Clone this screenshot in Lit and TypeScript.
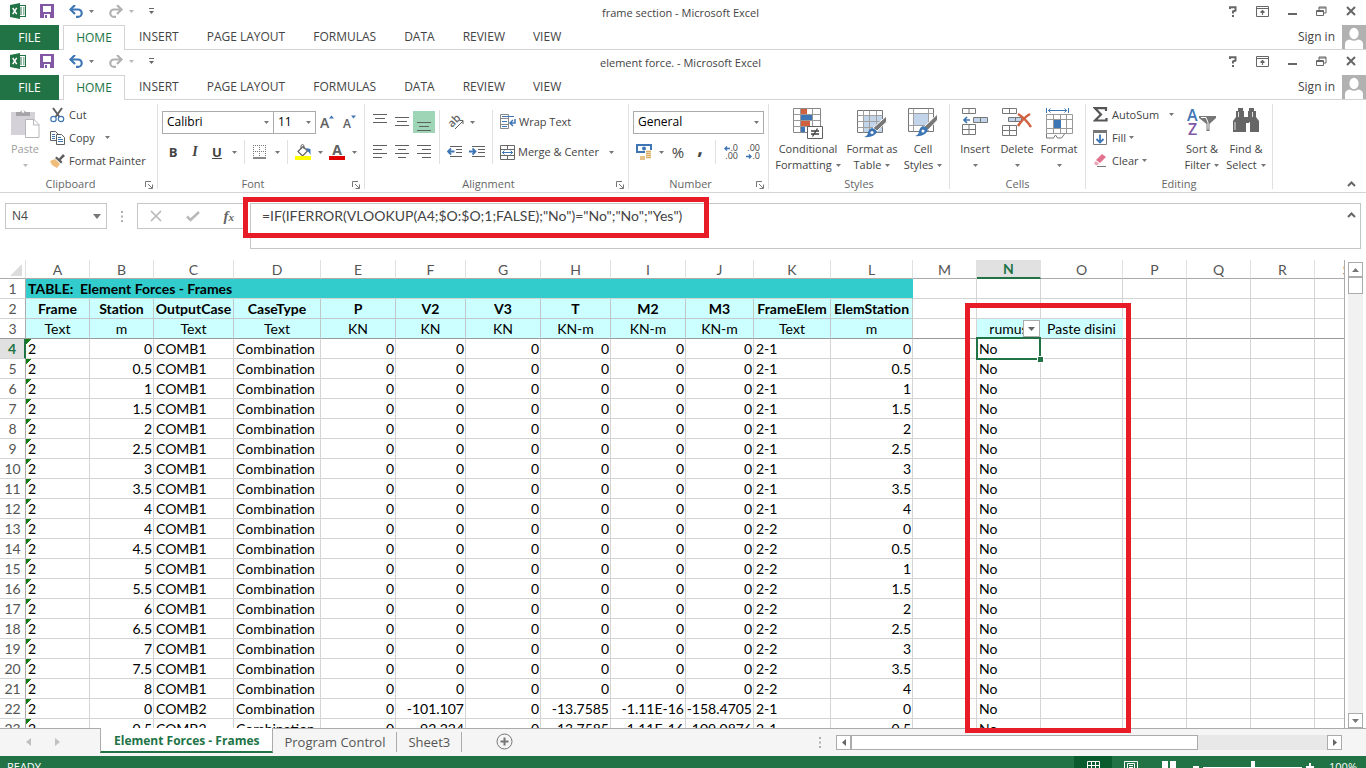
import { LitElement, html, svg, css, nothing } from "lit";
import { customElement, property } from "lit/decorators.js";
import { classMap } from "lit/directives/class-map.js";

const controls = css`
  :host { display: block; font-family: "Open Sans", "Noto Sans", sans-serif; font-size: 11px; line-height: 16px; color: #444; }
  * { box-sizing: border-box; }
  svg { display: block; flex: none; }
  button, select, input {
    font: inherit; color: inherit; background: transparent; border: 0; border-radius: 0; padding: 0; margin: 0; appearance: none;
  }
  button { white-space: nowrap; }
`;

const caret = (color = "#777") => svg`<svg width="5" height="3" viewBox="0 0 5 3"><path d="M0 0h5L2.5 3z" fill=${color} /></svg>`;

const icons = {
  excel: svg`<svg width="16" height="16" viewBox="0 0 16 16"><rect x="8.5" y="2.5" width="7" height="11" fill="#fff" stroke="#217346"/><path d="M10 5h2M13 5h1.5M10 7h2M13 7h1.5M10 9h2M13 9h1.5M10 11h2M13 11h1.5" stroke="#217346"/><path d="M0 2l10-2v16L0 14z" fill="#217346"/><path d="M2.7 5l4 6.200M6.700 4.800l-4 6.400" stroke="#fff" stroke-width="1.500"/></svg>`,
  save: svg`<svg width="14" height="14" viewBox="0 0 14 14"><path d="M1 1h12v12H1z" fill="none" stroke="#8258a4" stroke-width="2"/><path d="M1 8h12v5H1zM2 1h1v7H2zM11 1h1v7h-1z" fill="#8258a4"/><path d="M4 10h6v4H4z" fill="#fff"/><path d="M5 11h2v3H5z" fill="#8258a4"/></svg>`,
  undo: svg`<svg width="14" height="13" viewBox="0 0 14 13"><path d="M1.500 4.500H9a3.700 3.700 0 010 7.400H7" fill="none" stroke="#3e76b5" stroke-width="2.200"/><path d="M6 0L1.500 4.500 6 9" fill="none" stroke="#3e76b5" stroke-width="2.200"/></svg>`,
  redo: svg`<svg width="14" height="13" viewBox="0 0 14 13"><path d="M12.500 4.500H5a3.700 3.700 0 000 7.400h2" fill="none" stroke="#b1b1b1" stroke-width="2.200"/><path d="M8 0l4.500 4.500L8 9" fill="none" stroke="#b1b1b1" stroke-width="2.200"/></svg>`,
  customise: svg`<svg width="5" height="6" viewBox="0 0 5 6"><path d="M0 .5h5" stroke="#666"/><path d="M0 3h5L2.500 6z" fill="#666"/></svg>`,
  help: svg`<svg width="8" height="11" viewBox="0 0 8 11"><path d="M1 3V1.200h5.500v3.300L4 5.500v2" fill="none" stroke="#666" stroke-width="2"/><path d="M3 9h2v2H3z" fill="#666"/></svg>`,
  display: svg`<svg width="13" height="11" viewBox="0 0 13 11"><path d="M.5.5h12v10H.5zM.5 2.500h12" fill="none" stroke="#666"/><path d="M6.500 9V4.500M4.500 6.500l2-2 2 2" fill="none" stroke="#666" stroke-width="1.200"/></svg>`,
  minimise: svg`<svg width="9" height="11" viewBox="0 0 9 11"><path d="M0 7h9v2H0z" fill="#666"/></svg>`,
  restore: svg`<svg width="11" height="11" viewBox="0 0 11 11"><path d="M.5 4.500h7v5h-7zM.5 5.500h7M3 4V1h7v6H8M3 2h7" fill="none" stroke="#666"/></svg>`,
  close: svg`<svg width="10" height="10" viewBox="0 0 10 10"><path d="M1 1l8 8M9 1L1 9" stroke="#666" stroke-width="2"/></svg>`,
  avatar: svg`<svg width="24" height="24" viewBox="0 0 24 24"><path d="M0 0h24v24H0z" fill="#b1b1b1"/><ellipse cx="12" cy="8.500" rx="4.600" ry="5.800" fill="#fff"/><path d="M3 24v-5q0-4 5-4.500 4 2.500 8 0 5 .5 5 4.500v5z" fill="#fff"/></svg>`,
  paste: svg`<svg width="29" height="31" viewBox="0 0 29 31"><path d="M0 4h24v23H0z" fill="#d5d1d8"/><path d="M5 8V4h4a3.500 3.500 0 016 0h4v4z" fill="#a6a4a8"/><circle cx="12" cy="3.500" r="1.300" fill="#fff"/><path d="M14.500 11.500h8.500l5 5v13H14.500z" fill="#fff" stroke="#b7b5b9"/><path d="M22.500 11.500v5.500H28" fill="none" stroke="#b7b5b9"/></svg>`,
  cut: svg`<svg width="15" height="16" viewBox="0 0 15 16"><path d="M3 1l6.500 9M12 1L5.500 10" stroke="#606060" stroke-width="2"/><circle cx="3.500" cy="12" r="2.700" fill="none" stroke="#3e76b5" stroke-width="1.200"/><circle cx="11" cy="12" r="2.700" fill="none" stroke="#3e76b5" stroke-width="1.200"/></svg>`,
  copy: svg`<svg width="15" height="14" viewBox="0 0 15 14"><path d="M.5.5h5l3 3v6h-8z" fill="#fff" stroke="#606060"/><path d="M2 3.500h3M2 5.500h3M2 7.500h3" stroke="#3e76b5"/><path d="M6.500 3.500h5l3 3v7h-8z" fill="#fff" stroke="#606060"/><path d="M8 6.500h3M8 8.500h5M8 10.500h5" stroke="#3e76b5"/></svg>`,
  painter: svg`<svg width="15" height="14" viewBox="0 0 15 14"><path d="M0 7l5-2 5 5-3 4-5-3z" fill="#eebd7a"/><path d="M5 4l1.500-1.500 2.500 2L13 0l2 2-4.200 4 1.700 2L11 9.500z" fill="#606060"/></svg>`,
  grow: svg`<svg width="15" height="16" viewBox="0 0 15 16"><text x="0" y="14" font-size="14" font-weight="600" fill="#606060">A</text><path d="M9 4.500l2.500-3 2.500 3z" fill="#3e76b5"/></svg>`,
  shrink: svg`<svg width="15" height="16" viewBox="0 0 15 16"><text x="1" y="14" font-size="12" font-weight="600" fill="#606060">A</text><path d="M9 1.500h5l-2.500 3z" fill="#3e76b5"/></svg>`,
  borders: svg`<svg width="14" height="14" viewBox="0 0 14 14"><path d="M.5 0v12M6.500 0v12M12.500 0v12M0 .5h13M0 6.500h13" stroke="#777" stroke-dasharray="1 1"/><path d="M0 13h13" stroke="#606060" stroke-width="1.500"/></svg>`,
  fill: svg`<svg width="17" height="16" viewBox="0 0 17 16"><path d="M3 7.500l5-5 4.500 4.500-5 5z" fill="#fff" stroke="#606060" stroke-width="1.200"/><path d="M6 5V1.500q1.500-2 3 0V5" fill="none" stroke="#606060"/><path d="M11 4l4.500 1v6q-1.500-3-3-4z" fill="#3e76b5"/><path d="M0 12h16v4H0z" fill="#ffff00"/></svg>`,
  fontColor: svg`<svg width="16" height="16" viewBox="0 0 16 16"><text x="8" y="11" text-anchor="middle" font-size="14" font-weight="700" fill="#606060">A</text><path d="M0 12h16v4H0z" fill="#e00000"/></svg>`,
  orient: svg`<svg width="17" height="15" viewBox="0 0 17 15"><text x="0" y="0" font-size="11" font-weight="600" fill="#606060" transform="translate(4 13) rotate(-45)">ab</text><path d="M7 14l8-8M11.500 5.500H15V9" fill="none" stroke="#606060"/></svg>`,
  indentLess: svg`<svg width="16" height="12" viewBox="0 0 16 12"><path d="M3 .5h12M9 3.500h6M9 6.500h6M3 10.500h12" stroke="#606060"/><path d="M7.500 5.500H1.500M4 2.500l-3 3 3 3" fill="none" stroke="#3e76b5" stroke-width="1.800"/></svg>`,
  indentMore: svg`<svg width="16" height="12" viewBox="0 0 16 12"><path d="M3 .5h13M9 3.500h7M9 6.500h7M3 10.500h13" stroke="#606060"/><path d="M0 5.500h6M3.500 2.500l3 3-3 3" fill="none" stroke="#3e76b5" stroke-width="1.800"/></svg>`,
  wrap: svg`<svg width="16" height="16" viewBox="0 0 16 16"><path d="M.5.500h8v14h-8z" fill="#fff" stroke="#888"/><path d="M0 4.500h9M0 10.500h9" stroke="#888"/><path d="M2 2.500h12M2 7.500h5M2 12.500h5" stroke="#3e76b5"/><path d="M15 5v4h-4M13 6l-3 3 3 3" fill="none" stroke="#3e76b5" stroke-width="1.500"/></svg>`,
  merge: svg`<svg width="15" height="15" viewBox="0 0 15 15"><path d="M.5.500h14v14H.5zM.5 4.500h14M.5 10.500h14M7.500.500v4M7.500 10.500v4" fill="#fff" stroke="#666"/><path d="M2 7.500h11M4.500 5.500l-2 2 2 2M10.500 5.500l2 2-2 2" fill="none" stroke="#3e76b5"/></svg>`,
  currency: svg`<svg width="16" height="16" viewBox="0 0 16 16"><path d="M1 1h14v7H1z" fill="#fff" stroke="#3e76b5" stroke-width="2"/><circle cx="8" cy="4.500" r="2" fill="#3e76b5"/><path d="M9 6h7v9H9zM4 11h5v5H4z" fill="#fff"/><path d="M10 7.500h5M10 9.500h5M10 11.500h5M4 13h5M4 15h5M10 13.500h5" stroke="#dcae62" stroke-width="1.500"/></svg>`,
  condFormat: svg`<svg width="31" height="31" viewBox="0 0 31 31"><path d="M.5.500h27v24H.5z" fill="#fff" stroke="#888"/><path d="M8 1h6v5H8zM8 13h9v5H8z" fill="#d0603f"/><path d="M8 7h11v5H8zM8 19h4v5H8z" fill="#3e76b5"/><path d="M.5 6.500h27M.5 12.500h27M.5 18.500h27M7.500.500v24M19.500.500v24" stroke="#999"/><path d="M14.500 18.500h15v12h-15z" fill="#fff" stroke="#606060"/><path d="M18 23h8M18 26h8M24.500 20.500l-5 8" stroke="#444" stroke-width="1.300"/></svg>`,
  formatTable: svg`<svg width="30" height="30" viewBox="0 0 30 30"><path d="M.5 2.500h25v22H.5z" fill="#fff" stroke="#777"/><path d="M7 8h18v16H7z" fill="#c1d4ea"/><path d="M.5 7.500h25M.5 13.500h25M.5 19.500h25M6.500 2.500v22M12.500 2.500v22M19.500 2.500v22" stroke="#a0a0a0"/><path d="M29.500 8v6L20 23l-4-3z" fill="#777" stroke="#fff"/><path d="M15 20q4 1 5 4-3 6-13 5 4-1 4-5 1-3 4-4z" fill="#3e76b5"/><circle cx="15" cy="24.500" r="1.500" fill="#fff"/></svg>`,
  cellStyles: svg`<svg width="30" height="30" viewBox="0 0 30 30"><path d="M.5.500h25v23H.5z" fill="#fff" stroke="#777"/><path d="M6 6h14v11H6z" fill="#c1d4ea"/><path d="M.5 5.500h25M.5 17.500h25M5.500.500v23M20.500.500v23" stroke="#a0a0a0"/><path d="M29.500 6v6L20 22l-4-3z" fill="#777" stroke="#fff"/><path d="M15 18q4 1 5 4-3 7-13 6 4-1 4-5 1-4 4-5z" fill="#3e76b5"/><circle cx="15" cy="23" r="1.500" fill="#fff"/></svg>`,
  insert: svg`<svg width="27" height="28" viewBox="0 0 27 28"><g fill="#fff" stroke="#777"><path d="M.5.500h13v5H.5zM7 .5v5M.5 16.500h13v10H.5zM.5 21.500h13M7 16.500v10"/><path d="M11.500 9.500h14v5h-14zM18.500 9.500v5" fill="#c1d4ea"/></g><path d="M8 12H2M5 9l-3 3 3 3" fill="none" stroke="#3e76b5" stroke-width="1.700"/></svg>`,
  remove: svg`<svg width="30" height="28" viewBox="0 0 30 28"><g fill="#fff" stroke="#777"><path d="M.5.500h14v5H.5zM7.500.500v5M.5 17.500h14v10H.5zM.5 22.500h14M7.500 17.500v10"/><path d="M6.500 9.500h13v4h-13zM13.500 9.500v4" fill="#c1d4ea"/></g><path d="M16 6q7 4 13 13M28 6q-7 4-12 12" fill="none" stroke="#d0603f" stroke-width="2.500"/></svg>`,
  format: svg`<svg width="29" height="31" viewBox="0 0 29 31"><path d="M1.500 0v5M23.500 0v5M3 2.500h19M5.500.500l-2 2 2 2M19.500.500l2 2-2 2" fill="none" stroke="#3e76b5"/><path d="M1.500 6.500h26v19h-26zM1.500 11.500h26M1.500 20.500h26M8.500 6.500v19M15.500 6.500v19M21.500 6.500v19" fill="#fff" stroke="#999"/><path d="M1.500 26v4h7l2-3 2 3h4l3-4" fill="none" stroke="#777"/><path d="M9 12h7v8H9z" fill="#3e76b5"/></svg>`,
  sigma: svg`<svg width="15" height="15" viewBox="0 0 15 15"><path d="M13 4V1.200H2L8 7.500l-6 6h11.500V11" fill="none" stroke="#555" stroke-width="2.200"/></svg>`,
  fillDown: svg`<svg width="15" height="15" viewBox="0 0 15 15"><path d="M.5.500h13v14H.5z" fill="#fff" stroke="#777"/><path d="M0 0h14v3H0z" fill="#777"/><path d="M7 4.500v8M3.500 9L7 12.500 10.500 9" fill="none" stroke="#3e76b5" stroke-width="1.800"/></svg>`,
  clear: svg`<svg width="15" height="13" viewBox="0 0 15 13"><path d="M9 0l4 3-6 6-4-3z" fill="#e2718d"/><path d="M2.500 7L6 9.500 4 11.500 1 10z" fill="#e9a3b4"/><path d="M4 12.500h9" stroke="#777"/></svg>`,
  sort: svg`<svg width="30" height="28" viewBox="0 0 30 28"><text x="0" y="13" font-size="16" font-weight="600" fill="#3e76b5">A</text><text x="1" y="27" font-size="16" font-weight="600" fill="#8258a4">Z</text><path d="M12 8h17v2l-6.500 6v7h-3v-7L12 10z" fill="#777"/><path d="M14 9.500h5l2 5v7" fill="none" stroke="#fff"/></svg>`,
  find: svg`<svg width="26" height="24" viewBox="0 0 26 24"><path d="M5 0h5v3h1v6h4V3h1V0h5v3h2v6l3 4v11h-9v-9h-4v9H0V13l3-4V3h2z" fill="#666"/><path d="M2 14v8M16.500 14v8M5.500 4v5M19.500 4v5" stroke="#fff" stroke-width=".800"/></svg>`,
  launcher: svg`<svg width="8" height="8" viewBox="0 0 8 8"><path d="M.5 6V.5H6" fill="none" stroke="#777"/><path d="M3 3l4 4M7.500 3.500v4h-4" fill="none" stroke="#777"/></svg>`,
  chevron: svg`<svg width="9" height="6" viewBox="0 0 9 6"><path d="M1 5l3.500-3.500L8 5" fill="none" stroke="#666" stroke-width="2"/></svg>`,
  cancel: svg`<svg width="12" height="12" viewBox="0 0 12 12"><path d="M1 1l10 10M11 1L1 11" stroke="#b9b9b9" stroke-width="1.700"/></svg>`,
  accept: svg`<svg width="14" height="11" viewBox="0 0 14 11"><path d="M1 5.500L4.500 9 13 1" fill="none" stroke="#b9b9b9" stroke-width="2.500"/></svg>`,
  dots: svg`<svg width="2" height="11" viewBox="0 0 2 11"><path d="M0 0h2v2H0zM0 4.500h2v2H0zM0 9h2v2H0z" fill="#b0b0b0"/></svg>`,
  left: svg`<svg width="6" height="5" viewBox="0 0 6 5"><path d="M6 2.500H1M3 .5l-2 2 2 2" fill="none" stroke="#3e76b5" stroke-width="1.400"/></svg>`,
  right: svg`<svg width="6" height="5" viewBox="0 0 6 5"><path d="M0 2.500h5M3 .5l2 2-2 2" fill="none" stroke="#3e76b5" stroke-width="1.400"/></svg>`,
};

const lines = (widths: number[], top: number, anchor: "start" | "middle" | "end") => svg`<svg width="14" height="20" viewBox="0 0 14 20">${widths.map((w, i) => {
  const x = anchor === "start" ? 0 : anchor === "end" ? 14 - w : (14 - w) / 2;
  return svg`<path d="M${x} ${top + i * 4 + 0.5}h${w}" stroke="#606060"/>`;
})}</svg>`;

@customElement("window-bar")
class WindowBar extends LitElement {
  @property() name = "";
  static styles = [controls, css`
    .title { display: grid; grid-template-columns: 1fr auto 1fr; align-items: center; height: 25px; padding: 0 10px 0 10px; font-size: 11px; }
    .quick { display: flex; align-items: center; height: 22px; align-self: start; }
    .quick .save { margin-left: 14px; }
    .quick .step { display: flex; align-items: center; gap: 6px; margin-left: 15px; }
    .name { padding-right: 5px; padding-top: 1px; }
    .window { display: flex; justify-content: flex-end; align-items: center; gap: 19px; height: 22px; align-self: start; }
    .tabs { display: flex; height: 25px; border-bottom: 1px solid #d4d4d4; font-size: 12px; }
    .tabs button { height: 24px; padding: 0 14px; }
    .tabs .file { width: 59px; height: 25px; padding: 0; background: #217346; color: #fff; margin-right: 4px; }
    .tabs .home { width: 62px; height: 25px; padding: 0; border: 1px solid #d4d4d4; border-bottom: 0; background: #fff; color: #217346; }
    .tabs .account { display: flex; align-items: center; gap: 7px; margin-left: auto; padding: 0; }
  `];
  render() {
    return html`
      <header class="title">
        <div class="quick">
          ${icons.excel}
          <button class="save" aria-label="Save">${icons.save}</button>
          <button class="step" aria-label="Undo">${icons.undo} ${caret()}</button>
          <button class="step" aria-label="Redo">${icons.redo} ${caret("#b9b9b9")}</button>
          <button class="step" aria-label="Customize">${icons.customise}</button>
        </div>
        <div class="name">${this.name} - Microsoft Excel</div>
        <div class="window">
          <button aria-label="Help">${icons.help}</button>
          <button aria-label="Ribbon display">${icons.display}</button>
          <button aria-label="Minimize">${icons.minimise}</button>
          <button aria-label="Restore">${icons.restore}</button>
          <button aria-label="Close">${icons.close}</button>
        </div>
      </header>
      <nav class="tabs">
        <button class="file">FILE</button>
        <button class="home">HOME</button>
        ${["INSERT", "PAGE LAYOUT", "FORMULAS", "DATA", "REVIEW", "VIEW"].map((t) => html`<button>${t}</button>`)}
        <button class="account">Sign in ${icons.avatar}</button>
      </nav>`;
  }
}

@customElement("excel-ribbon")
class ExcelRibbon extends LitElement {
  static styles = [controls, css`
    .ribbon { display: flex; padding: 4px 0 3px; border-bottom: 1px solid #d4d4d4; }
    .group { flex: none; display: flex; flex-direction: column; height: 85px; border-right: 1px solid #e0e0e0; }
    .body { flex: 1; display: flex; min-height: 0; }
    .label { position: relative; display: flex; justify-content: center; line-height: 10px; height: 10px; padding-right: 16px; color: #666; }
    .label.plain { padding-right: 0; }
    .label button { position: absolute; right: 4px; top: 2px; }
    .clipboard { width: 158px; }
    .font { width: 207px; }
    .alignment { width: 264px; }
    .number { width: 140px; }
    .styles { width: 181px; }
    .styles .body { padding-left: 4px; }
    .cells { width: 136px; }
    .cells .body { padding-left: 4px; }
    .editing { width: 187px; }
    .big { display: flex; flex-direction: column; align-items: center; padding-top: 4px; }
    .big .pic { height: 33px; display: flex; align-items: flex-start; }
    .big .line { display: flex; align-items: center; gap: 4px; height: 16px; }
    .w50 { width: 50px; color: #a0a0a0; }
    .w70 { width: 70px; }
    .w58 { width: 58px; }
    .w44 { width: 44px; }
    .w42 { width: 42px; }
    .stack { display: flex; flex-direction: column; margin-top: -1px; }
    .stack button { display: flex; align-items: center; height: 23px; gap: 3px; }
    .stack .pic { width: 16px; }
    .stack .far { margin-left: 7px; }
    .rows { display: flex; flex-direction: column; gap: 8px; padding: 7px 4px 0; width: 100%; }
    .row { display: flex; align-items: center; height: 22px; }
    .row button, .grid button { flex: none; width: 22px; height: 22px; display: flex; align-items: center; justify-content: center; font-size: 13px; }
    .row .arrow { width: 12px; }
    .row .bold { font-weight: 700; }
    .row .italic { font-style: italic; font-family: "Liberation Serif", serif; font-weight: 700; font-size: 14px; }
    .row .under { text-decoration: underline; font-weight: 700; }
    .row .percent { font-size: 15px; }
    .row .comma { font-size: 20px; font-weight: 700; line-height: 10px; padding-bottom: 10px; }
    select { height: 23px; border: 1px solid #ababab; padding: 0 4px; color: #000; font-size: 12px; background: #fff url("data:image/svg+xml,%3Csvg xmlns='http://www.w3.org/2000/svg' width='5' height='3'%3E%3Cpath d='M0 0h5L2.500 3z' fill='%23777'/%3E%3C/svg%3E") no-repeat right 4px center; }
    .family { width: 112px; }
    .size { width: 43px; margin-left: -1px; }
    .general { width: 131px; }
    .rule { flex: none; width: 1px; background: #e0e0e0; height: 24px; margin: 0 4px; }
    .rule.tall { height: 54px; margin: 6px 4px 0; }
    .grid { display: grid; gap: 8px 0; padding-top: 7px; align-content: start; }
    .three { grid-template-columns: repeat(3, 22px); margin-left: 4px; }
    .two { grid-template-columns: repeat(2, 22px); }
    .grid .on { background: #9fd5b7; }
    .grid .wide { width: 44px; gap: 5px; grid-column: span 2; justify-content: flex-start; padding-left: 4px; }
    .grid .text { width: auto; justify-content: flex-start; gap: 3px; font-size: 11px; padding-left: 3px; }
    .grid .text .far { margin-left: 7px; }
    .row .decimal { flex-direction: column; align-items: flex-end; font-size: 9px; line-height: 8px; padding-right: 4px; }
    .decimal span { display: flex; align-items: center; height: 8px; }
    .collapse { margin-left: auto; align-self: flex-end; padding: 0 10px 2px 0; }
    .edit { width: 94px; padding-left: 7px; }
  `];
  big(cls: string, icon: unknown, first: string, second: string | null, color = "#777") {
    return html`<button class="big ${cls}"><span class="pic">${icon}</span><span class="line">${first}</span><span class="line">${second} ${caret(color)}</span></button>`;
  }
  label(text: string, launcher = true) {
    return html`<div class=${classMap({ label: true, plain: !launcher })}>${text}${launcher ? html`<button aria-label="${text} settings">${icons.launcher}</button>` : nothing}</div>`;
  }
  render() {
    const arrow = html`<button class="arrow" aria-label="More">${caret()}</button>`;
    return html`<div class="ribbon">
      <section class="group clipboard"><div class="body">
        ${this.big("w50", icons.paste, "Paste", null, "#b9b9b9")}
        <div class="stack">
          <button><span class="pic">${icons.cut}</span>Cut</button>
          <button><span class="pic">${icons.copy}</span>Copy <span class="far">${caret()}</span></button>
          <button><span class="pic">${icons.painter}</span>Format Painter</button>
        </div></div>${this.label("Clipboard")}</section>

      <section class="group font"><div class="body"><div class="rows">
        <div class="row">
          <select class="family" aria-label="Font"><option>Calibri</option></select>
          <select class="size" aria-label="Font size"><option>11</option></select>
          <button aria-label="Increase font size">${icons.grow}</button>
          <button aria-label="Decrease font size">${icons.shrink}</button>
        </div>
        <div class="row">
          <button class="bold">B</button><button class="italic">I</button><button class="under">U</button>${arrow}
          <span class="rule"></span>
          <button aria-label="Borders">${icons.borders}</button>${arrow}
          <span class="rule"></span>
          <button aria-label="Fill color">${icons.fill}</button>${arrow}
          <button aria-label="Font color">${icons.fontColor}</button>${arrow}
        </div></div></div>${this.label("Font")}</section>

      <section class="group alignment"><div class="body">
        <div class="grid three">
          <button aria-label="Top align">${lines([14, 10, 14], 2, "middle")}</button>
          <button aria-label="Middle align">${lines([14, 10, 14], 5, "middle")}</button>
          <button class="on" aria-label="Bottom align">${lines([14, 10, 14], 10, "middle")}</button>
          <button aria-label="Align left">${lines([14, 9, 14, 9], 3, "start")}</button>
          <button aria-label="Center">${lines([14, 8, 14, 8], 3, "middle")}</button>
          <button aria-label="Align right">${lines([14, 9, 14, 9], 3, "end")}</button>
        </div>
        <span class="rule tall"></span>
        <div class="grid two">
          <button class="wide" aria-label="Orientation">${icons.orient} ${caret()}</button>
          <button aria-label="Decrease indent">${icons.indentLess}</button>
          <button aria-label="Increase indent">${icons.indentMore}</button>
        </div>
        <span class="rule tall"></span>
        <div class="grid">
          <button class="text">${icons.wrap}Wrap Text</button>
          <button class="text">${icons.merge} Merge &amp; Center <span class="far">${caret()}</span></button>
        </div></div>${this.label("Alignment")}</section>

      <section class="group number"><div class="body"><div class="rows">
        <div class="row"><select class="general" aria-label="Number format"><option>General</option></select></div>
        <div class="row">
          <button aria-label="Accounting format">${icons.currency}</button>${arrow}
          <button class="percent">%</button><button class="comma">,</button>
          <span class="rule"></span>
          <button class="decimal" aria-label="Increase decimal"><span>${icons.left}.0</span><span>.00</span></button>
          <button class="decimal" aria-label="Decrease decimal"><span>.00</span><span>${icons.right}.0</span></button>
        </div></div></div>${this.label("Number")}</section>

      <section class="group styles"><div class="body">
        ${this.big("w70", icons.condFormat, "Conditional", "Formatting")}
        ${this.big("w58", icons.formatTable, "Format as", "Table")}
        ${this.big("w44", icons.cellStyles, "Cell", "Styles")}
      </div>${this.label("Styles", false)}</section>

      <section class="group cells"><div class="body">
        ${this.big("w42", icons.insert, "Insert", null)}
        ${this.big("w42", icons.remove, "Delete", null)}
        ${this.big("w42", icons.format, "Format", null)}
      </div>${this.label("Cells", false)}</section>

      <section class="group editing"><div class="body">
        <div class="stack edit">
          <button><span class="pic">${icons.sigma}</span>AutoSum <span class="far">${caret()}</span></button>
          <button><span class="pic">${icons.fillDown}</span>Fill ${caret()}</button>
          <button><span class="pic">${icons.clear}</span>Clear ${caret()}</button>
        </div>
        ${this.big("w44", icons.sort, "Sort &", "Filter")}
        ${this.big("w44", icons.find, "Find &", "Select")}
      </div>${this.label("Editing", false)}</section>
      <button class="collapse" aria-label="Collapse ribbon">${icons.chevron}</button>
    </div>`;
  }
}

@customElement("formula-bar")
class FormulaBar extends LitElement {
  static styles = [controls, css`
    .bar { position: relative; display: flex; align-items: flex-start; padding: 10px 5px 11px; color: #444; }
    .cell { width: 102px; height: 26px; border: 1px solid #c6c6c6; display: flex; align-items: center; padding: 0 5px 0 6px; }
    .cell input { flex: 1; min-width: 0; font-size: 12px; }
    .dots { margin: 8px 14px 0; }
    .tools { width: 107px; height: 26px; border: 1px solid #c6c6c6; display: flex; align-items: center; justify-content: space-between; padding: 0 9px 0 12px; }
    .fx { font: italic 700 15px "Liberation Serif", serif; color: #666; }
    .fx small { font-size: 11px; }
    .formula { flex: 1; margin-left: 6px; height: 46px; border: 1px solid #c6c6c6; display: flex; align-items: flex-start; padding: 0 4px 0 11px; }
    .formula input { flex: 1; min-width: 0; height: 22px; font-family: Lato, sans-serif; font-size: 14px; }
    .formula button { margin-top: 8px; }
    .mark { position: absolute; left: 243px; top: 4px; width: 466px; height: 41px; border: 5px solid #e81c26; pointer-events: none; }
  `];
  render() {
    return html`<div class="bar">
      <div class="cell"><input aria-label="Name box" .value=${"N4"}><button aria-label="Names"><svg width="8" height="5" viewBox="0 0 8 5"><path d="M0 0h8L4 5z" fill="#777"/></svg></button></div>
      <span class="dots">${icons.dots}</span>
      <div class="tools">
        <button aria-label="Cancel">${icons.cancel}</button>
        <button aria-label="Enter">${icons.accept}</button>
        <button class="fx" aria-label="Insert function">f<small>x</small></button>
      </div>
      <div class="formula">
        <input aria-label="Formula" .value=${'=IF(IFERROR(VLOOKUP(A4;$O:$O;1;FALSE);"No")="No";"No";"Yes")'}>
        <button aria-label="Collapse formula bar">${icons.chevron}</button>
      </div>
      <div class="mark"></div>
    </div>`;
  }
}

const columns: [string, number][] = [
  ["A", 64], ["B", 64], ["C", 80], ["D", 87], ["E", 75], ["F", 70], ["G", 75], ["H", 70], ["I", 75], ["J", 68],
  ["K", 77], ["L", 82], ["M", 64], ["N", 64], ["O", 82], ["P", 64], ["Q", 64], ["R", 64], ["S", 64],
];
const names = ["Frame", "Station", "OutputCase", "CaseType", "P", "V2", "V3", "T", "M2", "M3", "FrameElem", "ElemStation"];
const units = ["Text", "m", "Text", "Text", "KN", "KN", "KN", "KN-m", "KN-m", "KN-m", "Text", "m"];
const zeros = ["0", "0", "0", "0", "0", "0"];
const first = Array.from({ length: 9 }, (_, i) => ["2", String(i / 2), "COMB1", "Combination", ...zeros, "2-1", String(i / 2)]);
const second = Array.from({ length: 9 }, (_, i) => ["2", String(4 + i / 2), "COMB1", "Combination", ...zeros, "2-2", String(i / 2)]);
const records = [
  ...first,
  ...second,
  ["2", "0", "COMB2", "Combination", "0", "-101.107", "0", "-13.7585", "-1.11E-16", "-158.4705", "2-1", "0"],
  ["2", "0.5", "COMB2", "Combination", "0", "-92.224", "0", "-13.7585", "-1.11E-16", "-109.0876", "2-1", "0.5"],
];
const textColumns = new Set([0, 2, 3, 10]);

@customElement("work-sheet")
class WorkSheet extends LitElement {
  static styles = [controls, css`
    :host { flex: 1; min-height: 0; display: flex; position: relative; font-family: Lato, sans-serif; font-size: 14px; line-height: 18px; color: #000; }
    .view { flex: 1; min-width: 0; overflow: hidden; border-right: 1px solid #ababab; }
    table { border-collapse: separate; border-spacing: 0; table-layout: fixed; width: 1379px; }
    th, td { height: 20px; padding: 0 2px; border-right: 1px solid #d4d4d4; border-bottom: 1px solid #d4d4d4; font-weight: 400; white-space: nowrap; overflow: hidden; text-align: left; }
    col.side { width: 26px; }
    thead th { height: 19px; line-height: 17px; text-align: center; color: #555; border-color: #e0e0e0; border-bottom-color: #ababab; }
    thead .corner { padding: 0 3px 2px 0; vertical-align: bottom; }
    .corner svg { margin-left: auto; }
    thead .current { background: #e1e1e1; color: #217346; font-weight: 700; border-bottom: 2px solid #217346; }
    tbody th { text-align: center; padding: 0; color: #555; border-right-color: #ababab; }
    tbody th.current { background: #e1e1e1; color: #217346; font-weight: 700; border-right: 2px solid #217346; }
    .title { background: #33cccc; font-weight: 700; border-right-color: #33cccc; white-space: pre; }
    .name { background: #ccffff; font-weight: 700; text-align: center; border-color: #c0c8c8; padding: 0; }
    .unit { background: #ccffff; text-align: center; border-right-color: #c0c8c8; }
    .frozen td, .frozen th { border-bottom-color: #999; }
    .note { background: #ccffff; text-align: center; position: relative; border-right-color: #ccffff; }
    .filter { position: absolute; right: 0; top: 1px; width: 17px; height: 17px; border: 1px solid #ababab; background: #fff; display: flex; align-items: center; justify-content: center; }
    .num { text-align: right; padding: 0 1px 0 0; }
    .flag { background: linear-gradient(135deg, #107c10 4px, transparent 4px) no-repeat; }
    .selected { position: relative; overflow: visible; }
    .ring { position: absolute; left: -1px; top: -2px; right: -1px; bottom: -2px; border: 2px solid #217346; }
    .ring::after { content: ""; position: absolute; right: -4px; bottom: -4px; width: 5px; height: 5px; background: #217346; box-shadow: 0 0 0 1px #fff; }
    .scroll { width: 21px; display: flex; flex-direction: column; padding: 2px 3px 0; }
    .scroll button { height: 15px; width: 15px; border: 1px solid #ababab; display: flex; align-items: center; justify-content: center; background: #fff; }
    .track { flex: 1; background: #f1f1f1; }
    .thumb { height: 17px; border: 1px solid #ababab; background: #fff; }
    .mark { position: absolute; left: 965px; top: 43px; width: 166px; bottom: -5px; border: 5px solid #e81c26; pointer-events: none; z-index: 1; }
  `];
  blank(from: number) {
    return columns.slice(from).map(() => html`<td></td>`);
  }
  render() {
    return html`
      <div class="view"><table>
        <colgroup><col class="side">${columns.map(([, w]) => html`<col style="width:${w}px">`)}</colgroup>
        <thead><tr>
          <th class="corner"><svg width="12" height="12" viewBox="0 0 12 12"><path d="M12 0v12H0z" fill="#dcdcdc"/></svg></th>
          ${columns.map(([c]) => html`<th class=${classMap({ current: c === "N" })}>${c}</th>`)}
        </tr></thead>
        <tbody>
          <tr><th>1</th><td class="title" colspan="12">TABLE:  Element Forces - Frames</td>${this.blank(12)}</tr>
          <tr><th>2</th>${names.map((n) => html`<td class="name">${n}</td>`)}${this.blank(12)}</tr>
          <tr class="frozen"><th>3</th>${units.map((n) => html`<td class="unit">${n}</td>`)}<td></td>
            <td class="note">rumus<button class="filter" aria-label="Filter"><svg width="7" height="4" viewBox="0 0 7 4"><path d="M0 0h7L3.500 4z" fill="#666"/></svg></button></td>
            <td class="note">Paste disini</td>${this.blank(15)}</tr>
          ${records.map((r, i) => html`<tr>
            <th class=${classMap({ current: i === 0 })}>${i + 4}</th>
            ${r.map((v, c) => html`<td class=${classMap({ num: !textColumns.has(c), flag: c === 0 })}>${v}</td>`)}
            <td></td>
            <td class=${classMap({ selected: i === 0 })}>No${i === 0 ? html`<span class="ring"></span>` : nothing}</td>
            ${this.blank(14)}
          </tr>`)}
        </tbody>
      </table></div>
      <div class="scroll">
        <button aria-label="Scroll up"><svg width="7" height="4" viewBox="0 0 7 4"><path d="M0 4h7L3.500 0z" fill="#777"/></svg></button>
        <div class="track"><div class="thumb"></div></div>
        <button aria-label="Scroll down"><svg width="7" height="4" viewBox="0 0 7 4"><path d="M0 0h7L3.500 4z" fill="#777"/></svg></button>
      </div>
      <div class="mark"></div>`;
  }
}

@customElement("sheet-footer")
class SheetFooter extends LitElement {
  static styles = [controls, css`
    .tabs { display: flex; height: 28px; background: #f5f5f5; border-top: 1px solid #ababab; font-size: 13px; color: #555; }
    .nav { width: 100px; display: flex; align-items: center; gap: 24px; padding: 0 0 2px 26px; }
    .tab { height: 20px; margin-top: 3px; padding: 0 11px; border-right: 1px solid #ababab; }
    .tabs .active { height: 25px; margin: -1px 0 0; background: #fff; border: 1px solid #ababab; border-top: 0; border-bottom: 2px solid #217346; color: #217346; font-size: 12px; font-weight: 700; padding: 3px 13px 0; }
    .add { margin: 0 0 2px 34px; align-self: center; }
    .across { margin-left: auto; display: flex; align-items: center; width: 547px; padding-bottom: 1px; }
    .dots { margin-right: 15px; }
    .across button { width: 15px; height: 15px; border: 1px solid #ababab; background: #fff; display: flex; align-items: center; justify-content: center; }
    .track { flex: 1; height: 15px; background: #e8e8e8; }
    .thumb { width: 73%; height: 15px; border: 1px solid #ababab; background: #fff; }
    .end { width: 24px; }
    .status { height: 12px; overflow: hidden; background: #217346; color: #fff; font-size: 11px; }
    .line { display: flex; align-items: center; height: 22px; padding: 0 9px 0 7px; }
    .views { display: flex; margin-left: auto; }
    .views button { width: 38px; height: 22px; display: flex; align-items: center; justify-content: center; }
    .views .on { background: #0a5c2e; }
    .zoom { display: flex; align-items: center; gap: 4px; margin: 0 15px 0 5px; }
    .slider { width: 99px; height: 14px; }
    .slider::-webkit-slider-runnable-track { height: 14px; background: linear-gradient(#fff, #fff) center / 100% 1px no-repeat; }
    .slider::-webkit-slider-thumb { appearance: none; width: 4px; height: 12px; margin-top: 1px; background: #fff; }
  `];
  render() {
    return html`
      <div class="tabs">
        <div class="nav">
          <button aria-label="Previous sheet"><svg width="5" height="8" viewBox="0 0 5 8"><path d="M5 0v8L0 4z" fill="#c0c0c0"/></svg></button>
          <button aria-label="Next sheet"><svg width="5" height="8" viewBox="0 0 5 8"><path d="M0 0v8l5-4z" fill="#c0c0c0"/></svg></button>
        </div>
        <button class="tab active">Element Forces - Frames</button>
        <button class="tab">Program Control</button>
        <button class="tab">Sheet3</button>
        <button class="add" aria-label="New sheet"><svg width="17" height="17" viewBox="0 0 17 17"><circle cx="8.500" cy="8.500" r="7.500" fill="none" stroke="#777"/><path d="M8.500 4.500v8M4.500 8.500h8" stroke="#777" stroke-width="2"/></svg></button>
        <div class="across">
          <span class="dots">${icons.dots}</span>
          <button aria-label="Scroll left"><svg width="4" height="7" viewBox="0 0 4 7"><path d="M4 0v7L0 3.500z" fill="#666"/></svg></button>
          <div class="track"><div class="thumb"></div></div>
          <button aria-label="Scroll right"><svg width="4" height="7" viewBox="0 0 4 7"><path d="M0 0v7l4-3.500z" fill="#666"/></svg></button>
          <span class="end"></span>
        </div>
      </div>
      <div class="status"><div class="line">
        <span>READY</span>
        <div class="views">
          <button class="on" aria-label="Normal view"><svg width="13" height="13" viewBox="0 0 13 13"><path d="M.5.500h12v12H.5zM.5 4.500h12M.5 8.500h12M4.500.500v12M8.500.500v12" fill="none" stroke="#fff"/></svg></button>
          <button aria-label="Page layout"><svg width="14" height="13" viewBox="0 0 14 13"><path d="M.5.500h13v12H.5zM3.500 2.500h7v8h-7zM5 4.500h4M5 6.500h4M5 8.500h4" fill="none" stroke="#fff"/></svg></button>
          <button aria-label="Page break preview"><svg width="14" height="13" viewBox="0 0 14 13"><path d="M0 0h6v13H0zM8 0h6v13H8z" fill="#fff"/><path d="M7 8v5" stroke="#fff"/></svg></button>
        </div>
        <div class="zoom">
          <button aria-label="Zoom out"><svg width="6" height="8" viewBox="0 0 6 8"><path d="M0 3h6v2H0z" fill="#fff"/></svg></button>
          <input class="slider" type="range" aria-label="Zoom" min="0" max="100" .value=${"50"}>
          <button aria-label="Zoom in"><svg width="8" height="8" viewBox="0 0 8 8"><path d="M0 3h8v2H0zM3 0h2v8H3z" fill="#fff"/></svg></button>
        </div>
        <span>100%</span>
      </div></div>`;
  }
}

@customElement("app-root")
class AppRoot extends LitElement {
  static styles = css`
    :host { display: flex; flex-direction: column; height: 100vh; overflow: hidden; background: #fff; }
    window-bar, excel-ribbon, formula-bar, sheet-footer { flex: none; }
  `;
  render() {
    return html`
      <window-bar name="frame section"></window-bar>
      <window-bar name="element force."></window-bar>
      <excel-ribbon></excel-ribbon>
      <formula-bar></formula-bar>
      <work-sheet></work-sheet>
      <sheet-footer></sheet-footer>`;
  }
}
